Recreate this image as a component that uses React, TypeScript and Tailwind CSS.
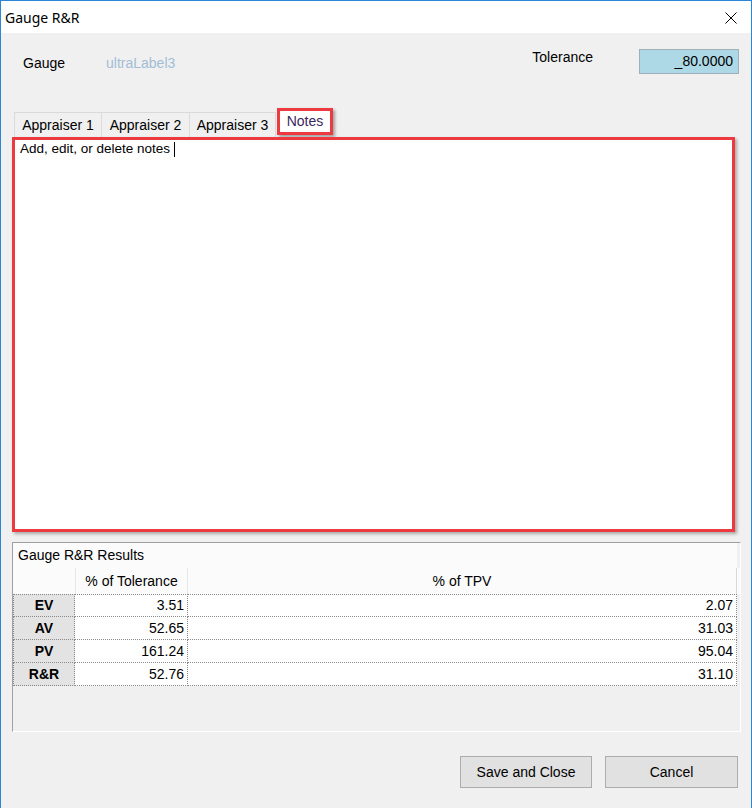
import React from "react";

const rows = [
  { name: "EV", tol: "3.51", tpv: "2.07" },
  { name: "AV", tol: "52.65", tpv: "31.03" },
  { name: "PV", tol: "161.24", tpv: "95.04" },
  { name: "R&R", tol: "52.76", tpv: "31.10" },
];

export default function App() {
  return (
    <div
      className="w-[752px] h-[808px] bg-[#f0f0f0] border-t border-l border-r border-[#2b86d6] flex flex-col overflow-hidden text-[14px] text-black"
      style={{ fontFamily: '"Liberation Sans", Arial, sans-serif' }}
    >
      {/* title bar */}
      <div className="h-[32px] bg-white flex items-center justify-between pl-[4px] pr-[14px] shrink-0">
        <span className="text-[14px]" style={{ fontFamily: '"Noto Sans", sans-serif' }}>
          Gauge R&amp;R
        </span>
        <svg width="12" height="12" viewBox="0 0 12 12" className="mt-[1px]">
          <path d="M0.5 0.5 L11.5 11.5 M11.5 0.5 L0.5 11.5" stroke="#000" strokeWidth="1" fill="none" />
        </svg>
      </div>

      {/* header */}
      <div className="h-[75px] flex justify-between items-start pl-[22px] pr-[12px] shrink-0">
        <div className="flex pt-[20px]">
          <span className="w-[83px]">Gauge</span>
          <span className="text-[#a3bdd6]">ultraLabel3</span>
        </div>
        <div className="flex items-start pt-[16px]">
          <span className="-mt-[2px] mr-[46px]">Tolerance</span>
          <div className="w-[100px] h-[25px] bg-[#add8e6] border border-[#9fb0b8] flex items-center justify-end pr-[5px]">
            _80.0000
          </div>
        </div>
      </div>

      {/* tabs */}
      <div className="h-[29px] flex items-end pl-[13px] shrink-0">
        <div className="w-[87px] h-[25px] flex items-center justify-center border-t border-l border-[#dadada]">
          Appraiser 1
        </div>
        <div className="w-[88px] h-[25px] flex items-center justify-center border-t border-l border-[#dadada]">
          Appraiser 2
        </div>
        <div className="w-[87px] h-[25px] flex items-center justify-center border-t border-l border-r border-[#dadada]">
          Appraiser 3
        </div>
        <div className="self-start ml-[1px] w-[56px] h-[27px] bg-white border-[3px] border-[#ec3a40] flex items-center justify-center text-[#3b2660] shadow-[2px_2px_3px_rgba(0,0,0,0.35)]">
          Notes
        </div>
      </div>

      {/* notes */}
      <div className="ml-[11px] w-[723px] h-[395px] bg-white border-[3px] border-[#ec3a40] shadow-[2px_2px_3px_rgba(0,0,0,0.3)] pl-[5px] pt-0 leading-[16px] shrink-0">
        <span className="text-[13.5px]">Add, edit, or delete notes</span>
        <span className="inline-block w-[1px] h-[15px] bg-black ml-[4px] align-middle" />
      </div>

      {/* results group */}
      <div className="mt-[10px] ml-[11px] w-[729px] h-[190px] border-t border-l border-[#a0a0a0] border-r border-b border-r-white border-b-white flex flex-col shrink-0">
        <div className="h-[25px] bg-[#fbfbfb] flex items-center pl-[5px] w-[724px]">Gauge R&amp;R Results</div>
        <div className="grid grid-cols-[62px_113px_549px] h-[26px] bg-[#fbfbfb]">
          <div />
          <div className="flex items-center justify-center border-l border-r border-[#e6e6e6]">% of Tolerance</div>
          <div className="flex items-center justify-center border-r border-[#d8d8d8]">% of TPV</div>
        </div>
        {rows.map((r, i) => (
          <div key={r.name} className="grid grid-cols-[62px_113px_549px] h-[23px]">
            <div
              className={`bg-[#e3e3e3] font-bold flex items-center justify-center border-l border-r border-b border-dotted border-[#8a8a8a] ${
                i === 0 ? "border-t" : ""
              }`}
            >
              {r.name}
            </div>
            <div
              className={`bg-white flex items-center justify-end pr-[3px] border-r border-b border-dotted border-[#8a8a8a] ${
                i === 0 ? "border-t" : ""
              }`}
            >
              {r.tol}
            </div>
            <div
              className={`bg-white flex items-center justify-end pr-[3px] border-r border-b border-dotted border-[#8a8a8a] ${
                i === 0 ? "border-t" : ""
              }`}
            >
              {r.tpv}
            </div>
          </div>
        ))}
      </div>

      {/* buttons */}
      <div className="mt-[24px] flex justify-end gap-[13px] pr-[13px] shrink-0">
        <button className="w-[132px] h-[32px] bg-[#e1e1e1] border border-[#adadad]">Save and Close</button>
        <button className="w-[133px] h-[32px] bg-[#e1e1e1] border border-[#adadad]">Cancel</button>
      </div>
    </div>
  );
}
